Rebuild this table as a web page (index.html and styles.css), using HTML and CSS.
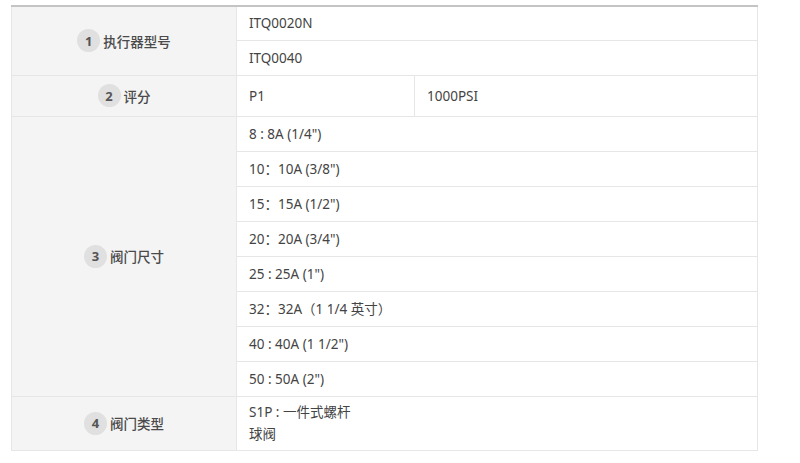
FILE: index.html
```html
<!DOCTYPE html>
<html lang="zh">
<head>
<meta charset="utf-8">
<link rel="stylesheet" href="styles.css">
</head>
<body>
<div class="page">
<table class="spec">
  <colgroup><col class="c1"><col class="c2"><col class="c3"></colgroup>
  <tbody>
    <tr class="r-first">
      <th rowspan="2"><span class="label"><span class="num">1</span><span class="name">执行器型号</span></span></th>
      <td colspan="2">ITQ0020N</td>
    </tr>
    <tr><td colspan="2">ITQ0040</td></tr>
    <tr class="r-tall">
      <th><span class="label"><span class="num">2</span><span class="name">评分</span></span></th>
      <td>P1</td>
      <td>1000PSI</td>
    </tr>
    <tr>
      <th rowspan="8"><span class="label"><span class="num">3</span><span class="name">阀门尺寸</span></span></th>
      <td colspan="2">8 : 8A (1/4")</td>
    </tr>
    <tr><td colspan="2">10：10A (3/8")</td></tr>
    <tr><td colspan="2">15：15A (1/2")</td></tr>
    <tr><td colspan="2">20：20A (3/4")</td></tr>
    <tr><td colspan="2">25 : 25A (1")</td></tr>
    <tr><td colspan="2">32：32A（1 1/4 英寸）</td></tr>
    <tr><td colspan="2">40 : 40A (1 1/2")</td></tr>
    <tr><td colspan="2">50 : 50A (2")</td></tr>
    <tr class="r-last">
      <th><span class="label"><span class="num">4</span><span class="name">阀门类型</span></span></th>
      <td colspan="2" class="multi">S1P : 一件式螺杆<br>球阀</td>
    </tr>
  </tbody>
</table>
</div>
</body>
</html>
```

FILE: styles.css
```css
html, body {
  margin: 0;
  padding: 0;
  background: #ffffff;
}
.page {
  padding: 5px 0 0 11px;
}
.spec {
  border-collapse: collapse;
  width: 746px;
  table-layout: fixed;
  font-family: "Noto Sans", "Noto Sans CJK SC", sans-serif;
  font-size: 13.5px;
  color: #444444;
  border-top: 2px solid #c4c4c4;
}
.c1 { width: 225px; }
.c2 { width: 178px; }
.c3 { width: 343px; }
.spec th, .spec td {
  border: 1px solid #e6e6e6;
  height: 35px;
  padding: 0 12px;
  box-sizing: border-box;
  text-align: left;
  vertical-align: middle;
  line-height: 22px;
}
.spec tr.r-first td { height: 34px; }
.spec tr.r-tall td, .spec tr.r-tall th { height: 41px; }
.spec tr.r-last td, .spec tr.r-last th { height: 54px; }
.spec th {
  background: #f4f4f4;
  text-align: center;
  font-weight: normal;
  padding: 0;
}
.spec tr:first-child th, .spec tr:first-child td { border-top: none; }
.label {
  display: inline-flex;
  align-items: center;
  gap: 3px;
  color: #4a4a4a;
}
.num {
  width: 23px;
  height: 23px;
  border-radius: 50%;
  background: #e0e0e0;
  display: inline-flex;
  align-items: center;
  justify-content: center;
  font-weight: bold;
  font-size: 13px;
  color: #555;
}
.name {
  font-family: "Noto Sans CJK SC", sans-serif;
  font-size: 13.5px;
  font-weight: 500;
}
.multi {
  line-height: 22px;
  padding-top: 3px;
}
```
